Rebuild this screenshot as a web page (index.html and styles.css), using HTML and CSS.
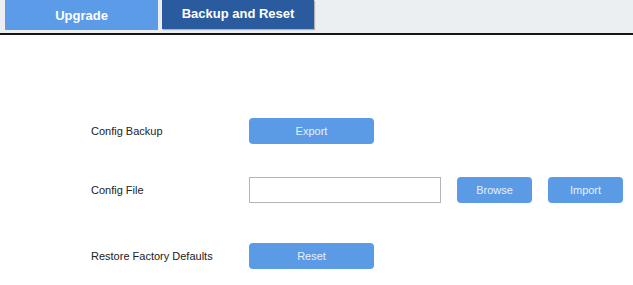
FILE: index.html
```html
<!DOCTYPE html>
<html lang="en">
<head>
    <meta charset="UTF-8">
    <title>Backup and Reset</title>
    <link rel="stylesheet" href="styles.css">
</head>
<body>
    <div class="tab-bar">
        <div class="tab">Upgrade</div>
        <div class="tab active">Backup and Reset</div>
    </div>

    <div class="content">
        <div class="row">
            <span class="label">Config Backup</span>
            <button class="btn btn-wide">Export</button>
        </div>
        <div class="row">
            <span class="label">Config File</span>
            <input type="text" class="file-input">
            <button class="btn btn-small">Browse</button>
            <button class="btn btn-small">Import</button>
        </div>
        <div class="row row-reset">
            <span class="label">Restore Factory Defaults</span>
            <button class="btn btn-wide">Reset</button>
        </div>
    </div>
</body>
</html>
```

FILE: styles.css
```css
body {
    margin: 0;
    font-family: 'Liberation Sans', Arial, sans-serif;
    background-color: #fff;
    color: #222;
}
.tab-bar {
    display: flex;
    gap: 4px;
    height: 33px;
    padding-left: 5px;
    background-color: #eceff2;
    border-bottom: 2px solid #151515;
    box-sizing: border-box;
    height: 35px;
}
.tab {
    width: 153px;
    height: 30px;
    background-color: #5b9be8;
    color: #fff;
    font-weight: bold;
    font-size: 13px;
    display: flex;
    justify-content: center;
    align-items: center;
    padding-top: 1px;
    box-sizing: border-box;
}
.tab.active {
    width: 152px;
    height: 29px;
    padding-top: 0;
    padding-bottom: 2px;
    background-color: #2b5b9f;
    box-shadow: 1px 1px 1px rgba(0,0,0,0.25);
}
.content {
    padding: 83px 0 0 91px;
    display: flex;
    flex-direction: column;
    gap: 33px;
}
.row {
    display: flex;
    align-items: center;
    gap: 16px;
    height: 26px;
}
.row-reset {
    margin-top: 7px;
}
.label {
    width: 142px;
    font-size: 11px;
    color: #222;
}
.btn {
    height: 26px;
    border: none;
    border-radius: 4px;
    background-color: #5b9be6;
    color: #e8f0fb;
    font-family: 'Liberation Sans', Arial, sans-serif;
    font-size: 11px;
    padding: 0;
    cursor: pointer;
}
.btn-wide {
    width: 125px;
}
.btn-small {
    width: 75px;
}
.file-input {
    width: 192px;
    height: 26px;
    box-sizing: border-box;
    border: 1px solid #b5b5b5;
    margin: 0;
    padding: 0 4px;
}
```
